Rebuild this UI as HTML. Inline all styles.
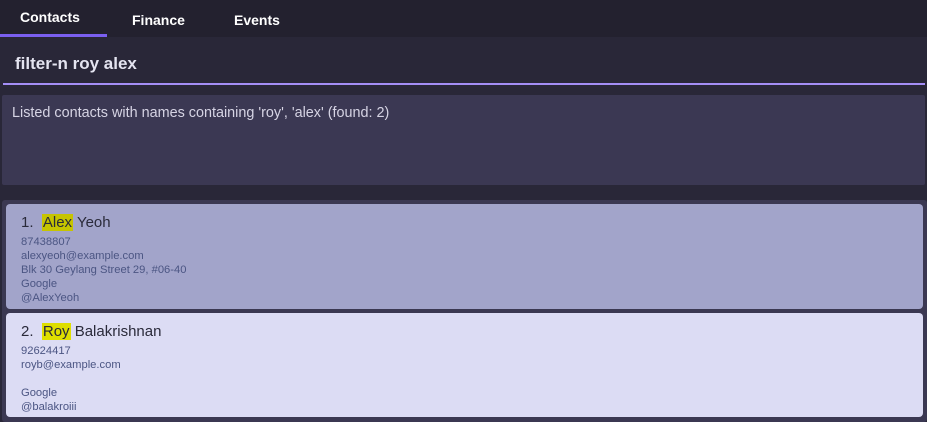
<!DOCTYPE html>
<html><head><style>
body{margin:0;width:927px;height:422px;background:#292738;font-family:"Liberation Sans",sans-serif;position:relative;overflow:hidden}
.tabs{position:absolute;left:0;top:0;width:927px;height:37px;background:#23212f}
.tab{position:absolute;color:#fff;font-weight:bold;font-size:14px}
.ul{position:absolute;left:0;top:34px;width:107px;height:3px;background:#7a5ff0}
.cmd{position:absolute;left:15px;top:54px;color:#e4e4f0;font-weight:bold;font-size:17px}
.line{position:absolute;left:3px;top:83px;width:922px;height:2px;background:#a48ef6}
.res{position:absolute;left:2px;top:95px;width:923px;height:90px;background:#3b3853;border-radius:2px}
.res span{position:absolute;left:10px;top:10px;color:#d6d4e4;font-size:14.4px}
.list{position:absolute;left:2px;top:200px;width:925px;height:222px;background:#3b3852;border-radius:3px}
.card{position:absolute;left:6px;width:917px;height:104px;border-radius:4px}
.name{position:absolute;left:15px;top:10px;font-size:15px;color:#2a2a3a}
.hl{background:#c6c400;padding:0 1px}
.det{position:absolute;left:15px;top:31px;font-size:11.2px;line-height:14px;color:#4b5583}
</style></head><body>
<div class="tabs">
<div class="tab" style="left:20px;top:9px">Contacts</div>
<div class="tab" style="left:132px;top:12px">Finance</div>
<div class="tab" style="left:234px;top:12px">Events</div>
<div class="ul"></div>
</div>
<div class="cmd">filter-n roy alex</div>
<div class="line"></div>
<div class="res"><span>Listed contacts with names containing 'roy', 'alex' (found: 2)</span></div>
<div class="list"></div>
<div class="card" style="top:204px;height:105px;background:#a2a4ca">
<div class="name">1.&nbsp;&nbsp;<span class="hl">Alex</span> Yeoh</div>
<div class="det">87438807<br>alexyeoh@example.com<br>Blk 30 Geylang Street 29, #06-40<br>Google<br>@AlexYeoh</div>
</div>
<div class="card" style="top:313px;background:#dcdcf4">
<div class="name">2.&nbsp;&nbsp;<span class="hl" style="background:#dede00">Roy</span> Balakrishnan</div>
<div class="det">92624417<br>royb@example.com<br><br>Google<br>@balakroiii</div>
</div>
</body></html>
